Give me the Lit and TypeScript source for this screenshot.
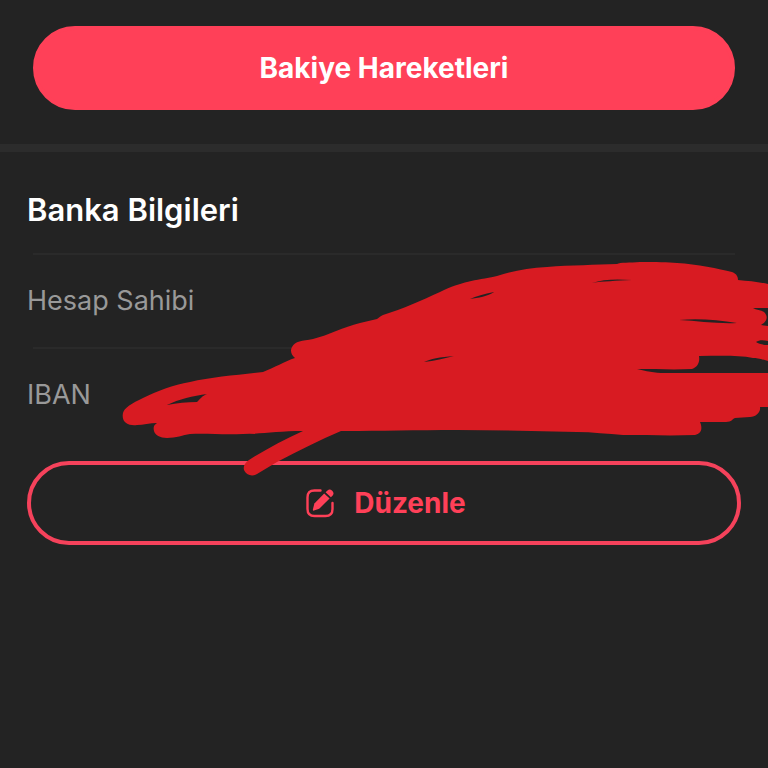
import { LitElement, html, css, svg } from "lit";
import { customElement, property } from "lit/decorators.js";

@customElement("scribble-cover")
class ScribbleCover extends LitElement {
  static styles = css`
    :host {
      display: block;
      pointer-events: none;
    }
    .ink {
      display: block;
      width: 100%;
      overflow: visible;
    }
    .fill {
      fill: #d81b22;
      fill-rule: evenodd;
    }
  `;

  render() {
    return html`<svg class="ink" viewBox="0 152 768 336" aria-hidden="true">
      ${svg`<path class="fill" d="
        M123 413 C124 408 132 403 143 398 C157 391 173 385 190 382 C212 377 238 375 263 372
        C274 368 285 361 295 358 C291 355 290 350 292 347 C295 341 302 341 313 339
        C329 335 343 327 360 323 L377 319 C379 318 380 316 383 315
        C403 309 422 300 440 292 C463 281 473 281 497 276 C513 271 528 268 547 267
        C571 265 596 265 617 264 C620 262 630 263 640 262 C656 262 668 262 677 263
        C697 264 719 269 732 272 C737 274 738 277 738 280 C749 281 759 282 768 284
        V308 L753 308 C756 310 761 310 764 312 C768 316 768 321 761 325 L768 326
        V341 C763 340 759 340 756 342 C759 344 763 345 768 345
        V361 C761 359 757 358 753 358 C738 355 719 356 699 356 C700 362 698 367 692 369
        C674 370 656 369 637 369 C646 371 654 373 665 373 H768
        V407 L760 407 C761 412 756 417 750 417 L735 418 C732 419 732 422 726 422
        L700 422 C703 429 701 434 695 435 C670 436 646 435 623 435
        C608 434 592 432 577 432 C538 431 498 430 457 430 C417 430 377 431 347 431
        L341 431 C320 440 298 451 277 462 L257 474 C252 477 246 475 244 470
        C243 466 245 463 249 460 C266 449 284 440 303 431 C277 431 261 434 243 434
        C222 435 207 433 190 434 C183 435 176 438 167 438 C160 438 155 435 154 431
        C153 427 154 425 157 423 C150 423 143 425 137 425 C129 426 121 423 123 413 Z
        M167 405 C179 399 193 396 207 394 C202 396 200 399 197 402 C187 402 177 403 167 405 Z
        M470 299 C476 296 484 294 494 292 C488 296 478 298 470 299 Z
        M424 362 C430 359 440 357 454 356 C445 358 434 361 424 362 Z
        M592 283 C603 279 617 279 632 280 C616 281 603 281 592 283 Z
        M679 320 C698 318 718 320 737 323 C718 324 698 321 679 320 Z"/>`}
    </svg>`;
  }
}

@customElement("info-row")
class InfoRow extends LitElement {
  @property() label = "";

  static styles = css`
    :host {
      display: block;
    }
    .row {
      display: flex;
      align-items: center;
      height: 92px;
      padding: 0 27px;
      color: #999;
      font-size: 27px;
      line-height: 32px;
    }
    .rule {
      height: 2px;
      margin: 0 33px;
      background: #2a2a2a;
    }
  `;

  render() {
    return html`<div class="rule"></div>
      <div class="row">${this.label}</div>`;
  }
}

@customElement("app-root")
class AppRoot extends LitElement {
  static styles = css`
    :host {
      display: block;
      min-height: 100vh;
      background: #232323;
      font-family: Inter, "Liberation Sans", sans-serif;
    }
    .balance {
      padding: 26px 33px 34px;
      border-bottom: 8px solid #2c2c2c;
    }
    .button {
      display: flex;
      align-items: center;
      justify-content: center;
      gap: 20px;
      box-sizing: border-box;
      width: 100%;
      height: 84px;
      margin: 0;
      padding: 0;
      border: 4px solid #ff4058;
      border-radius: 42px;
      font-family: inherit;
      font-size: 28px;
      line-height: 32px;
      font-weight: 700;
      cursor: pointer;
    }
    .solid {
      background: #ff4058;
      color: #fff;
    }
    .outline {
      padding-left: 4px;
      background: transparent;
      border-color: #f5425b;
      color: #ff4058;
    }
    .bank {
      position: relative;
    }
    .title {
      margin: 0;
      padding: 38px 27px 23px;
      color: #fff;
      font-size: 31px;
      line-height: 40px;
      font-weight: 600;
    }
    .actions {
      padding: 20px 27px;
    }
    .icon {
      width: 28px;
      height: 28px;
      overflow: visible;
    }
    .cover {
      position: absolute;
      top: 0;
      left: 0;
      width: 100%;
    }
  `;

  render() {
    return html`
      <section class="balance">
        <button class="button solid" type="button">Bakiye Hareketleri</button>
      </section>
      <section class="bank">
        <h2 class="title">Banka Bilgileri</h2>
        <info-row label="Hesap Sahibi"></info-row>
        <info-row label="IBAN"></info-row>
        <div class="actions">
          <button class="button outline" type="button">
            <svg class="icon" viewBox="0 0 28 28" aria-hidden="true">
              <path
                d="M14.500 1.500 H8.500 Q1.500 1.500 1.500 8.500 V20 Q1.500 27 8.500 27 H19.500 Q26.500 27 26.500 20 V14"
                fill="none"
                stroke="currentColor"
                stroke-width="2.400"
                stroke-linecap="round"
              />
              <path
                d="M18.200 4.400 L23.600 9.600 L13.200 19.800 L8 21.600 Q6.600 21.900 6.900 20.500 L8.400 14.600 Z"
                fill="currentColor"
              />
              <path
                d="M19.600 3.200 L21.500 1.400 Q23.800 -0.600 26.200 1.800 Q28.600 4.200 26.700 6.500 L24.900 8.300 Z"
                fill="currentColor"
              />
            </svg>
            <span>Düzenle</span>
          </button>
        </div>
        <scribble-cover class="cover"></scribble-cover>
      </section>
    `;
  }
}
